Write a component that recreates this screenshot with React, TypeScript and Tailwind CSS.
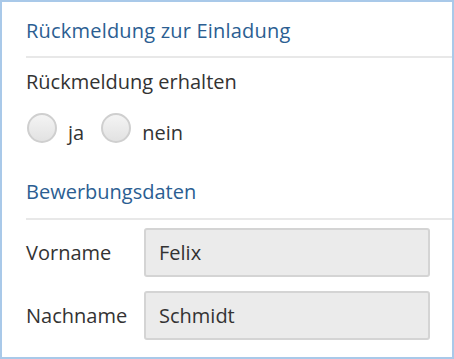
import React from "react";

function Radio({ label }: { label: string }) {
  return (
    <label className="flex items-end gap-[11px]">
      <span className="block w-[30px] h-[30px] rounded-full border-2 border-[#cfcfcf] bg-gradient-to-b from-[#f4f4f4] to-[#e2e2e2]" />
      <span className="text-[20px] leading-none text-[#333]">{label}</span>
    </label>
  );
}

function Field({ label, value }: { label: string; value: string }) {
  return (
    <div className="flex items-center">
      <div className="w-[118px] text-[20px] text-[#333]">{label}</div>
      <div className="flex-1 h-[49px] rounded-[3px] border-2 border-[#d4d4d4] bg-[#ebebeb] flex items-center px-[13px] text-[20px] text-[#333]">
        {value}
      </div>
    </div>
  );
}

export default function App() {
  return (
    <div
      className="w-[454px] h-[359px] bg-white border-2 border-[#a9c9e9] pl-[24px] pr-0 pt-[16px]"
      style={{ fontFamily: '"Open Sans", sans-serif' }}
    >
      <div className="text-[20px] tracking-[0.2px] text-[#2b5e92] leading-[26px] pb-[12px] border-b-2 border-[#e8e8e8]">
        Rückmeldung zur Einladung
      </div>
      <div className="text-[20px] text-[#333] leading-[26px] mt-[11px]">Rückmeldung erhalten</div>
      <div className="flex gap-[17px] mt-[18px] pl-[1px]">
        <Radio label="ja" />
        <Radio label="nein" />
      </div>
      <div className="text-[20px] text-[#2b5e92] leading-[26px] pb-[13px] border-b-2 border-[#e8e8e8] mt-[36px]">
        Bewerbungsdaten
      </div>
      <div className="flex flex-col gap-[14px] mt-[8px] pr-[22px]">
        <Field label="Vorname" value="Felix" />
        <Field label="Nachname" value="Schmidt" />
      </div>
    </div>
  );
}
